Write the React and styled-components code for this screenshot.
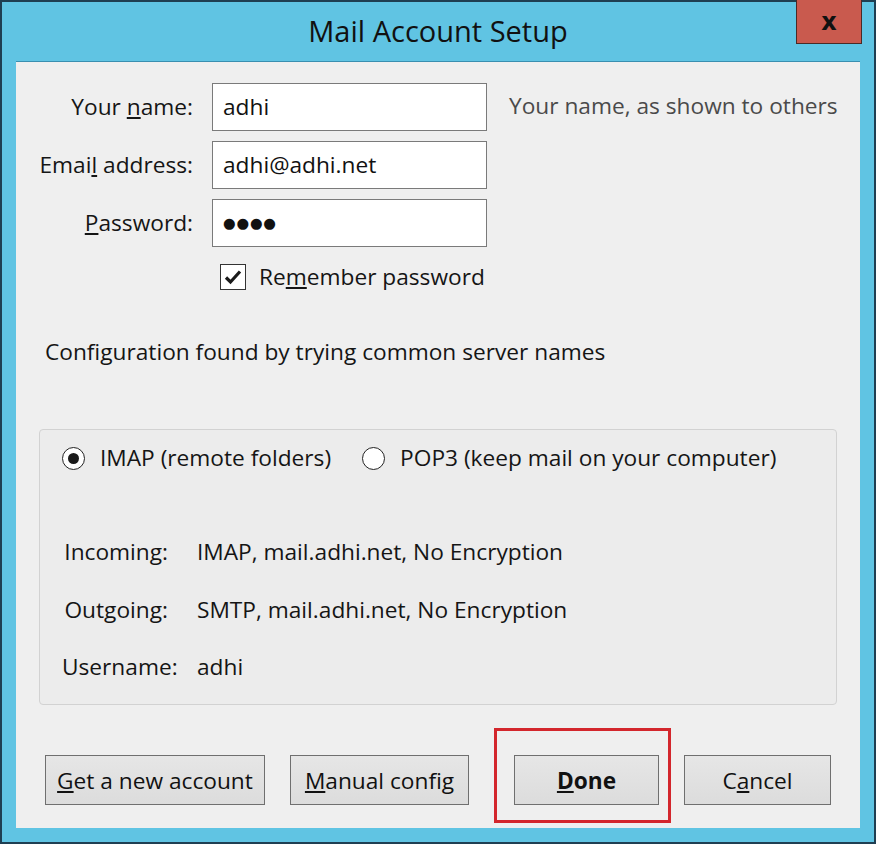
import React from "react";
import styled, { createGlobalStyle } from "styled-components";

const Global = createGlobalStyle`
  html, body { margin: 0; padding: 0; background: #5fc3e2; }
  body { font-family: "Open Sans", "Noto Sans", "DejaVu Sans", sans-serif; }
  * { box-sizing: border-box; }
`;

const Window = styled.div`
  width: 876px;
  height: 844px;
  background: #60c4e3;
  border: 2px solid #1f3f52;
  display: flex;
  flex-direction: column;
  padding: 0 14px 14px 14px;
`;

const TitleBar = styled.div`
  height: 59px;
  display: grid;
  grid-template-columns: 1fr auto 1fr;
  align-items: start;
`;

const Title = styled.div`
  grid-column: 2;
  align-self: center;
  font-size: 29px;
  line-height: 36px;
  color: #111;
  margin-top: -1px;
`;

const CloseButton = styled.div`
  grid-column: 3;
  justify-self: end;
  margin-right: -2px;
  margin-top: -2px;
  width: 66px;
  height: 44px;
  background: #c95a4e;
  border: 1px solid #4a2a26;
  border-top: none;
  display: flex;
  align-items: center;
  justify-content: center;
  font-family: "DejaVu Sans", sans-serif;
  font-weight: bold;
  font-size: 24px;
  color: #111;
`;

const Client = styled.div`
  flex: 1;
  background: #efefef;
  border-top: 1px solid #3a8fb0;
  display: flex;
  flex-direction: column;
  padding: 21px 23px 0 0;
  color: #151515;
  font-size: 22.7px;
  line-height: 30px;
`;

const FormGrid = styled.div`
  display: grid;
  grid-template-columns: 177px 275px auto;
  column-gap: 19px;
  row-gap: 10px;
  align-items: center;
`;

const Label = styled.label`
  text-align: right;
  white-space: nowrap;
`;

const TextBox = styled.div`
  height: 48px;
  background: #fff;
  border: 1.5px solid #7a7a7a;
  display: flex;
  align-items: center;
  padding: 0 10px;
  color: #111;
`;

const Dots = styled.span`
  font-size: 14.5px;
  letter-spacing: 0.8px;
  font-family: "DejaVu Sans", sans-serif;
`;

const Hint = styled.div`
  margin-left: 3px;
  color: #4a4a4a;
  white-space: nowrap;
  align-self: start;
  margin-top: 8px;
`;

const CheckRow = styled.div`
  grid-column: 2 / 4;
  display: flex;
  align-items: center;
  gap: 13px;
  margin-top: 5px;
  margin-left: 8px;
`;

const CheckBox = styled.span`
  width: 26px;
  height: 26px;
  border: 1.5px solid #333;
  background: #fff;
  display: flex;
  align-items: center;
  justify-content: center;
`;

const Status = styled.div`
  margin: 45px 0 0 29px;
  white-space: nowrap;
`;

const Group = styled.div`
  margin: 62px 0 0 23px;
  height: 276px;
  border: 1px solid #d2d2d2;
  border-radius: 4px;
  background: #ececec;
  padding: 13px 0 0 22px;
  display: flex;
  flex-direction: column;
`;

const RadioRow = styled.div`
  display: flex;
  align-items: center;
`;

const RadioOption = styled.label`
  display: flex;
  align-items: center;
  gap: 15px;
  margin-right: 31px;
  white-space: nowrap;
`;

const Radio = styled.span`
  width: 23px;
  height: 23px;
  border-radius: 50%;
  border: 1.5px solid #222;
  background: #fff;
  display: flex;
  align-items: center;
  justify-content: center;
  &::after {
    content: "";
    width: 11px;
    height: 11px;
    border-radius: 50%;
    background: ${(p) => (p.$on ? "#1a1a1a" : "transparent")};
  }
`;

const InfoGrid = styled.div`
  display: grid;
  grid-template-columns: 106px auto;
  column-gap: 29px;
  row-gap: 27.5px;
  margin-top: 64px;
  align-items: center;
`;

const InfoLabel = styled.div`
  text-align: right;
  white-space: nowrap;
`;

const InfoValue = styled.div`
  white-space: nowrap;
`;

const ButtonRow = styled.div`
  display: flex;
  align-items: center;
  gap: 25px;
  margin: 50px 0 0 29px;
`;

const Button = styled.button`
  height: 50px;
  width: ${(p) => p.$w}px;
  background: linear-gradient(#e6e6e6, #dcdcdc);
  border: 1.5px solid #6f6f6f;
  font-family: inherit;
  font-size: 22.7px;
  font-weight: ${(p) => (p.$bold ? 700 : 400)};
  color: #111;
  padding: 0;
  white-space: nowrap;
`;

const Highlight = styled.span`
  position: relative;
  margin-left: 20px;
  display: inline-flex;
  &::after {
    content: "";
    position: absolute;
    left: -20px;
    right: -12px;
    top: -27px;
    bottom: -18px;
    border: 3px solid #d3262c;
    pointer-events: none;
  }
`;

export default function App() {
  return (
    <>
      <Global />
      <Window>
        <TitleBar>
          <Title>Mail Account Setup</Title>
          <CloseButton>x</CloseButton>
        </TitleBar>
        <Client>
          <FormGrid>
            <Label>Your <u>n</u>ame:</Label>
            <TextBox>adhi</TextBox>
            <Hint>Your name, as shown to others</Hint>
            <Label>Emai<u>l</u> address:</Label>
            <TextBox>adhi@adhi.net</TextBox>
            <span />
            <Label><u>P</u>assword:</Label>
            <TextBox><Dots>●●●●</Dots></TextBox>
            <span />
            <CheckRow>
              <CheckBox>
                <svg width="18" height="16" viewBox="0 0 18 16">
                  <path d="M2 8.5 L6.5 13 L16 2.5" fill="none" stroke="#1a1a1a" strokeWidth="3.2" strokeLinejoin="miter" />
                </svg>
              </CheckBox>
              <span>Re<u>m</u>ember password</span>
            </CheckRow>
          </FormGrid>
          <Status>Configuration found by trying common server names</Status>
          <Group>
            <RadioRow>
              <RadioOption><Radio $on />IMAP (remote folders)</RadioOption>
              <RadioOption><Radio />POP3 (keep mail on your computer)</RadioOption>
            </RadioRow>
            <InfoGrid>
              <InfoLabel>Incoming:</InfoLabel>
              <InfoValue>IMAP, mail.adhi.net, No Encryption</InfoValue>
              <InfoLabel>Outgoing:</InfoLabel>
              <InfoValue>SMTP, mail.adhi.net, No Encryption</InfoValue>
              <InfoLabel>Username:</InfoLabel>
              <InfoValue>adhi</InfoValue>
            </InfoGrid>
          </Group>
          <ButtonRow>
            <Button $w={220}><u>G</u>et a new account</Button>
            <Button $w={179}><u>M</u>anual config</Button>
            <Highlight>
              <Button $w={145} $bold><u>D</u>one</Button>
            </Highlight>
            <Button $w={147}>C<u>a</u>ncel</Button>
          </ButtonRow>
        </Client>
      </Window>
    </>
  );
}
